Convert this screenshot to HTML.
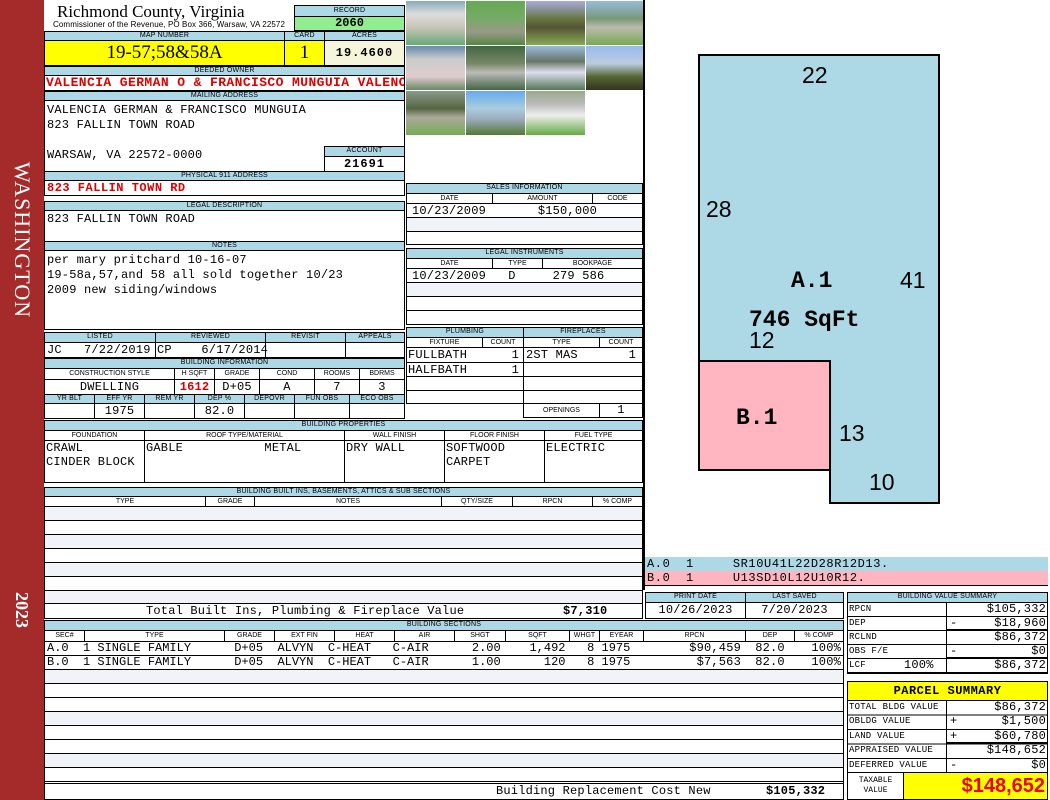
<!DOCTYPE html>
<html><head><meta charset="utf-8"><style>
*{margin:0;padding:0}
body{width:1050px;height:800px;position:relative;background:#fff;overflow:hidden;font-family:"Liberation Mono",monospace;font-size:12px;color:#000}
div{position:absolute;box-sizing:border-box}
.b{border:1px solid #000}
.h{background:#add8e6;border:1px solid #000;font:7px/8px "Liberation Sans",sans-serif;text-align:center;text-transform:uppercase;letter-spacing:.2px}
.c{border:1px solid #000;font:7px/9px "Liberation Sans",sans-serif;text-align:center}
.t{white-space:nowrap;line-height:14px;letter-spacing:.2px}
.r{text-align:right}
.ce{text-align:center}
.lb{background:#f0f4f8}
</style></head><body>
<!-- sidebar -->
<div style="left:0;top:0;width:44px;height:800px;background:#a52a2a"></div>
<div style="left:22px;top:240px;width:0;height:0"><div style="left:-100px;top:-13px;width:200px;height:26px;transform:rotate(90deg);color:#fff;font:22px/26px 'Liberation Serif',serif;text-align:center;letter-spacing:1px">WASHINGTON</div></div>
<div style="left:22px;top:610px;width:0;height:0"><div style="left:-40px;top:-12px;width:80px;height:24px;transform:rotate(90deg);color:#fff;font:bold 18px/24px 'Liberation Serif',serif;text-align:center">2023</div></div>

<!-- title -->
<div style="left:57px;top:2px;font:17px/20px 'Liberation Serif',serif;white-space:nowrap">Richmond County, Virginia</div>
<div style="left:53px;top:20px;font:8px/9px 'Liberation Sans',sans-serif;white-space:nowrap;letter-spacing:.1px">Commissioner of the Revenue, PO Box 366, Warsaw, VA 22572</div>
<div class="h" style="left:294px;top:5px;width:111px;height:12px;line-height:10px">Record</div>
<div class="b" style="left:294px;top:16px;width:111px;height:15px;background:#90ee90;font:bold 12px/13px 'Liberation Mono';text-align:center">2060</div>
<div class="h" style="left:44px;top:31px;width:241px;height:10px">Map Number</div>
<div class="h" style="left:284px;top:31px;width:41px;height:10px">Card</div>
<div class="h" style="left:324px;top:31px;width:81px;height:10px">Acres</div>
<div class="b" style="left:44px;top:40px;width:241px;height:26px;background:#ffff00;font:19px/24px 'Liberation Serif',serif;text-align:center">19-57;58&amp;58A</div>
<div class="b" style="left:284px;top:40px;width:41px;height:26px;background:#ffff00;font:19px/24px 'Liberation Serif',serif;text-align:center">1</div>
<div class="b" style="left:324px;top:40px;width:81px;height:26px;background:#f5f5dc;font:bold 12px/24px 'Liberation Mono';text-align:center;letter-spacing:1px">19.4600</div>
<div class="h" style="left:44px;top:66px;width:361px;height:10px">Deeded Owner</div>
<div class="b t" style="left:44px;top:75px;width:361px;height:16px;color:#d00;font-weight:bold;font-size:13px;overflow:hidden;padding-left:1px;letter-spacing:.4px">VALENCIA GERMAN O &amp; FRANCISCO MUNGUIA VALENC</div>
<div class="h" style="left:44px;top:91px;width:361px;height:10px">Mailing Address</div>
<div class="b t" style="left:44px;top:100px;width:361px;height:72px;padding:2px 2px;line-height:15px">VALENCIA GERMAN &amp; FRANCISCO MUNGUIA<br>823 FALLIN TOWN ROAD<br><br>WARSAW, VA 22572-0000</div>
<div class="h" style="left:324px;top:146px;width:81px;height:11px">Account</div>
<div class="b" style="left:324px;top:156px;width:81px;height:16px;font:bold 12px/14px 'Liberation Mono';text-align:center;letter-spacing:1px">21691</div>
<div class="h" style="left:44px;top:171px;width:361px;height:10px">Physical 911 Address</div>
<div class="b t" style="left:44px;top:180px;width:361px;height:16px;color:#d00;font-weight:bold;padding-left:2px;letter-spacing:.5px">823 FALLIN TOWN RD</div>
<div class="h" style="left:44px;top:201px;width:361px;height:10px">Legal Description</div>
<div class="b t" style="left:44px;top:210px;width:361px;height:32px;padding:1px 2px">823 FALLIN TOWN ROAD</div>
<div class="h" style="left:44px;top:241px;width:361px;height:10px">Notes</div>
<div class="b t" style="left:44px;top:250px;width:361px;height:80px;padding:2px 2px;line-height:15px">per mary pritchard 10-16-07<br>19-58a,57,and 58 all sold together 10/23<br>2009 new siding/windows</div>

<!-- listed -->
<div class="h" style="left:44px;top:332px;width:112px;height:11px">Listed</div>
<div class="h" style="left:155px;top:332px;width:111px;height:11px">Reviewed</div>
<div class="h" style="left:265px;top:332px;width:81px;height:11px">Revisit</div>
<div class="h" style="left:345px;top:332px;width:60px;height:11px">Appeals</div>
<div class="b t" style="left:44px;top:342px;width:112px;height:16px;padding-left:2px">JC&nbsp;&nbsp;&nbsp;7/22/2019</div>
<div class="b t" style="left:155px;top:342px;width:111px;height:16px;padding-left:1px">CP&nbsp;&nbsp;&nbsp;&nbsp;6/17/2014</div>
<div class="b" style="left:265px;top:342px;width:81px;height:16px"></div>
<div class="b" style="left:345px;top:342px;width:60px;height:16px"></div>

<!-- building info -->
<div class="h" style="left:44px;top:358px;width:361px;height:11px">Building Information</div>
<div class="c" style="left:44px;top:368px;width:131px;height:12px">CONSTRUCTION STYLE</div>
<div class="c" style="left:174px;top:368px;width:41px;height:12px">H SQFT</div>
<div class="c" style="left:214px;top:368px;width:46px;height:12px">GRADE</div>
<div class="c" style="left:259px;top:368px;width:56px;height:12px">COND</div>
<div class="c" style="left:314px;top:368px;width:46px;height:12px">ROOMS</div>
<div class="c" style="left:359px;top:368px;width:46px;height:12px">BDRMS</div>
<div class="b t ce" style="left:44px;top:379px;width:131px;height:16px">DWELLING</div>
<div class="b t ce" style="left:174px;top:379px;width:41px;height:16px;color:#d00;font-weight:bold">1612</div>
<div class="b t ce" style="left:214px;top:379px;width:46px;height:16px">D+05</div>
<div class="b t ce" style="left:259px;top:379px;width:56px;height:16px">A</div>
<div class="b t ce" style="left:314px;top:379px;width:46px;height:16px">7</div>
<div class="b t ce" style="left:359px;top:379px;width:46px;height:16px">3</div>
<div class="h" style="left:44px;top:394px;width:51px;height:10px">YR BLT</div>
<div class="h" style="left:94px;top:394px;width:51px;height:10px">EFF YR</div>
<div class="h" style="left:144px;top:394px;width:51px;height:10px">REM YR</div>
<div class="h" style="left:194px;top:394px;width:51px;height:10px">DEP %</div>
<div class="h" style="left:244px;top:394px;width:51px;height:10px">DEPOVR</div>
<div class="h" style="left:294px;top:394px;width:56px;height:10px">FUN OBS</div>
<div class="h" style="left:349px;top:394px;width:56px;height:10px">ECO OBS</div>
<div class="b" style="left:44px;top:403px;width:51px;height:16px"></div>
<div class="b t ce" style="left:94px;top:403px;width:51px;height:16px">1975</div>
<div class="b" style="left:144px;top:403px;width:51px;height:16px"></div>
<div class="b t ce" style="left:194px;top:403px;width:51px;height:16px">82.0</div>
<div class="b" style="left:244px;top:403px;width:51px;height:16px"></div>
<div class="b" style="left:294px;top:403px;width:56px;height:16px"></div>
<div class="b" style="left:349px;top:403px;width:56px;height:16px"></div>

<!-- photos -->
<div style="left:406px;top:1px;width:59px;height:44px;background:linear-gradient(#8ab 0,#ddd 30%,#c9c4b8 60%,#6a7 100%)"></div>
<div style="left:466px;top:1px;width:59px;height:44px;background:linear-gradient(#6a5 0,#7a6 40%,#998 70%,#584 100%)"></div>
<div style="left:526px;top:1px;width:59px;height:44px;background:linear-gradient(#aad 0,#674 40%,#553 60%,#8a5 100%)"></div>
<div style="left:586px;top:1px;width:57px;height:44px;background:linear-gradient(#9bd 0,#797 40%,#bba 60%,#7a5 100%)"></div>
<div style="left:406px;top:46px;width:59px;height:44px;background:linear-gradient(#68a 0,#ccc 30%,#dcc 70%,#686 100%)"></div>
<div style="left:466px;top:46px;width:59px;height:44px;background:linear-gradient(#464 0,#786 40%,#bbb 60%,#464 100%)"></div>
<div style="left:526px;top:46px;width:59px;height:44px;background:linear-gradient(#9bd 0,#676 35%,#dde 60%,#575 100%)"></div>
<div style="left:586px;top:46px;width:57px;height:44px;background:linear-gradient(#9be 0,#bcd 40%,#563 70%,#332 100%)"></div>
<div style="left:406px;top:91px;width:59px;height:44px;background:linear-gradient(#898 0,#564 40%,#aa9 60%,#7a5 100%)"></div>
<div style="left:466px;top:91px;width:59px;height:44px;background:linear-gradient(#6ae 0,#acd 40%,#9ab 65%,#573 100%)"></div>
<div style="left:526px;top:91px;width:59px;height:44px;background:linear-gradient(#9a8 0,#bbb 30%,#eee 55%,#6a4 100%)"></div>
<div style="left:643px;top:0;width:2px;height:590px;background:#000"></div>

<!-- sales -->
<div class="h" style="left:406px;top:183px;width:237px;height:11px">Sales Information</div>
<div class="c" style="left:406px;top:193px;width:87px;height:11px">DATE</div>
<div class="c" style="left:492px;top:193px;width:101px;height:11px">AMOUNT</div>
<div class="c" style="left:592px;top:193px;width:51px;height:11px">CODE</div>
<div class="b t" style="left:406px;top:203px;width:237px;height:15px;padding-left:5px">10/23/2009&nbsp;&nbsp;&nbsp;&nbsp;&nbsp;&nbsp;&nbsp;$150,000</div>
<div class="b lb" style="left:406px;top:217px;width:237px;height:15px"></div>
<div class="b" style="left:406px;top:231px;width:237px;height:14px"></div>
<div class="h" style="left:406px;top:248px;width:237px;height:11px">Legal Instruments</div>
<div class="c" style="left:406px;top:258px;width:87px;height:11px">DATE</div>
<div class="c" style="left:492px;top:258px;width:51px;height:11px">TYPE</div>
<div class="c" style="left:542px;top:258px;width:101px;height:11px">BOOKPAGE</div>
<div class="b t" style="left:406px;top:268px;width:237px;height:15px;padding-left:5px">10/23/2009&nbsp;&nbsp;&nbsp;D&nbsp;&nbsp;&nbsp;&nbsp;&nbsp;279 586</div>
<div class="b lb" style="left:406px;top:282px;width:237px;height:15px"></div>
<div class="b" style="left:406px;top:296px;width:237px;height:15px"></div>
<div class="b" style="left:406px;top:310px;width:237px;height:15px"></div>

<!-- plumbing -->
<div class="h" style="left:406px;top:327px;width:118px;height:11px">Plumbing</div>
<div class="h" style="left:523px;top:327px;width:120px;height:11px">Fireplaces</div>
<div class="c" style="left:406px;top:337px;width:77px;height:11px">FIXTURE</div>
<div class="c" style="left:482px;top:337px;width:42px;height:11px">COUNT</div>
<div class="c" style="left:523px;top:337px;width:77px;height:11px">TYPE</div>
<div class="c" style="left:599px;top:337px;width:44px;height:11px">COUNT</div>
<div class="b t" style="left:406px;top:347px;width:118px;height:16px;padding:0 4px 0 1px">FULLBATH<span style="float:right">1</span></div>
<div class="b t" style="left:406px;top:362px;width:118px;height:15px;padding:0 4px 0 1px">HALFBATH<span style="float:right">1</span></div>
<div class="b" style="left:406px;top:376px;width:118px;height:15px"></div>
<div class="b" style="left:406px;top:390px;width:118px;height:14px"></div>
<div class="b t" style="left:523px;top:347px;width:120px;height:16px;padding:0 6px 0 2px">2ST MAS<span style="float:right">1</span></div>
<div class="b" style="left:523px;top:362px;width:120px;height:15px"></div>
<div class="b" style="left:523px;top:376px;width:120px;height:15px"></div>
<div class="b" style="left:523px;top:390px;width:120px;height:14px"></div>
<div class="c" style="left:523px;top:403px;width:77px;height:15px;line-height:13px">OPENINGS</div>
<div class="b t ce" style="left:599px;top:403px;width:44px;height:15px;line-height:13px">1</div>

<!-- building properties -->
<div class="h" style="left:44px;top:420px;width:599px;height:11px">Building Properties</div>
<div class="c" style="left:44px;top:430px;width:101px;height:11px">FOUNDATION</div>
<div class="c" style="left:144px;top:430px;width:201px;height:11px">ROOF TYPE/MATERIAL</div>
<div class="c" style="left:344px;top:430px;width:101px;height:11px">WALL FINISH</div>
<div class="c" style="left:444px;top:430px;width:101px;height:11px">FLOOR FINISH</div>
<div class="c" style="left:544px;top:430px;width:99px;height:11px">FUEL TYPE</div>
<div class="b t" style="left:44px;top:440px;width:101px;height:43px;padding-left:1px">CRAWL<br>CINDER BLOCK</div>
<div class="b t" style="left:144px;top:440px;width:201px;height:43px;padding-left:1px">GABLE&nbsp;&nbsp;&nbsp;&nbsp;&nbsp;&nbsp;&nbsp;&nbsp;&nbsp;&nbsp;&nbsp;METAL</div>
<div class="b t" style="left:344px;top:440px;width:101px;height:43px;padding-left:1px">DRY WALL</div>
<div class="b t" style="left:444px;top:440px;width:101px;height:43px;padding-left:1px">SOFTWOOD<br>CARPET</div>
<div class="b t" style="left:544px;top:440px;width:99px;height:43px;padding-left:1px">ELECTRIC</div>

<!-- built ins -->
<div class="h" style="left:44px;top:487px;width:599px;height:10px">Building Built Ins, Basements, Attics &amp; Sub Sections</div>
<div class="c" style="left:44px;top:496px;width:162px;height:11px">TYPE</div>
<div class="c" style="left:205px;top:496px;width:50px;height:11px">GRADE</div>
<div class="c" style="left:254px;top:496px;width:188px;height:11px">NOTES</div>
<div class="c" style="left:441px;top:496px;width:72px;height:11px">QTY/SIZE</div>
<div class="c" style="left:512px;top:496px;width:81px;height:11px">RPCN</div>
<div class="c" style="left:592px;top:496px;width:51px;height:11px">% COMP</div>
<div class="b" style="left:44px;top:506px;width:599px;height:98px;background:repeating-linear-gradient(#f0f4f8 0,#f0f4f8 13px,#000 13px,#000 14px,#fff 14px,#fff 27px,#000 27px,#000 28px)"></div>
<div class="b t" style="left:44px;top:603px;width:599px;height:16px;font-size:12px;line-height:15px"><span style="position:absolute;left:101px">Total Built Ins, Plumbing &amp; Fireplace Value</span><span style="position:absolute;left:518px;font-weight:bold">$7,310</span></div>

<!-- building sections -->
<div class="h" style="left:44px;top:620px;width:800px;height:11px">Building Sections</div>
<div class="c" style="left:44px;top:630px;width:41px;height:12px">SEC#</div>
<div class="c" style="left:84px;top:630px;width:141px;height:12px">TYPE</div>
<div class="c" style="left:224px;top:630px;width:51px;height:12px">GRADE</div>
<div class="c" style="left:274px;top:630px;width:61px;height:12px">EXT FIN</div>
<div class="c" style="left:334px;top:630px;width:61px;height:12px">HEAT</div>
<div class="c" style="left:394px;top:630px;width:61px;height:12px">AIR</div>
<div class="c" style="left:454px;top:630px;width:52px;height:12px">SHGT</div>
<div class="c" style="left:505px;top:630px;width:65px;height:12px">SQFT</div>
<div class="c" style="left:569px;top:630px;width:31px;height:12px">WHGT</div>
<div class="c" style="left:599px;top:630px;width:45px;height:12px">EYEAR</div>
<div class="c" style="left:643px;top:630px;width:103px;height:12px">RPCN</div>
<div class="c" style="left:745px;top:630px;width:50px;height:12px">DEP</div>
<div class="c" style="left:794px;top:630px;width:50px;height:12px">% COMP</div>
<div class="b" style="left:44px;top:641px;width:800px;height:143px;background:repeating-linear-gradient(#fff 0,#fff 13px,#000 13px,#000 14px,#fff 14px,#fff 27px,#000 27px,#000 28px,#f0f4f8 28px,#f0f4f8 41px,#000 41px,#000 42px)"></div>
<div class="t" style="left:47px;top:641px;width:800px;letter-spacing:0">A.0&nbsp;&nbsp;1 SINGLE FAMILY&nbsp;&nbsp;&nbsp;&nbsp;&nbsp;&nbsp;D+05&nbsp;&nbsp;ALVYN&nbsp;&nbsp;C-HEAT&nbsp;&nbsp;&nbsp;C-AIR&nbsp;&nbsp;&nbsp;&nbsp;&nbsp;&nbsp;2.00&nbsp;&nbsp;&nbsp;&nbsp;1,492&nbsp;&nbsp;&nbsp;8 1975</div>
<div class="t" style="left:47px;top:655px;width:800px;letter-spacing:0">B.0&nbsp;&nbsp;1 SINGLE FAMILY&nbsp;&nbsp;&nbsp;&nbsp;&nbsp;&nbsp;D+05&nbsp;&nbsp;ALVYN&nbsp;&nbsp;C-HEAT&nbsp;&nbsp;&nbsp;C-AIR&nbsp;&nbsp;&nbsp;&nbsp;&nbsp;&nbsp;1.00&nbsp;&nbsp;&nbsp;&nbsp;&nbsp;&nbsp;120&nbsp;&nbsp;&nbsp;8 1975</div>
<div class="t r" style="left:643px;top:641px;width:98px">$90,459</div>
<div class="t r" style="left:643px;top:655px;width:98px">$7,563</div>
<div class="t ce" style="left:745px;top:641px;width:50px">82.0</div>
<div class="t ce" style="left:745px;top:655px;width:50px">82.0</div>
<div class="t r" style="left:794px;top:641px;width:47px">100%</div>
<div class="t r" style="left:794px;top:655px;width:47px">100%</div>
<div class="b t" style="left:44px;top:783px;width:800px;height:17px;line-height:15px"><span style="position:absolute;left:451px">Building Replacement Cost New</span><span style="position:absolute;left:721px;font-weight:bold">$105,332</span></div>

<!-- sketch -->
<svg style="position:absolute;left:0;top:0" width="1050" height="600">
<polygon points="699,55 939,55 939,503 830,503 830,470 699,470" fill="#add8e6" stroke="#000" stroke-width="2"/>
<rect x="699" y="361" width="131" height="109" fill="#ffb6c1" stroke="#000" stroke-width="2"/>
<g font-family="Liberation Sans,sans-serif" font-size="23">
<text x="802" y="83">22</text><text x="706" y="217">28</text><text x="900" y="288">41</text>
<text x="749" y="348">12</text><text x="839" y="441">13</text><text x="869" y="490">10</text></g>
<g font-family="Liberation Mono,monospace" font-weight="bold" font-size="23">
<text x="791" y="287">A.1</text><text x="749" y="326">746 SqFt</text><text x="736" y="424">B.1</text></g>
</svg>
<div class="t" style="left:645px;top:557px;width:403px;height:15px;background:#add8e6;font-size:12px;padding-left:2px;letter-spacing:.6px">A.0&nbsp;&nbsp;1&nbsp;&nbsp;&nbsp;&nbsp;&nbsp;SR10U41L22D28R12D13.</div>
<div class="t" style="left:645px;top:571px;width:403px;height:15px;background:#ffb6c1;font-size:12px;padding-left:2px;letter-spacing:.6px">B.0&nbsp;&nbsp;1&nbsp;&nbsp;&nbsp;&nbsp;&nbsp;U13SD10L12U10R12.</div>
<div style="left:645px;top:585px;width:403px;height:1px;background:#000"></div>

<!-- print date -->
<div class="h" style="left:645px;top:592px;width:101px;height:11px">Print Date</div>
<div class="h" style="left:745px;top:592px;width:99px;height:11px">Last Saved</div>
<div class="b t ce" style="left:645px;top:602px;width:101px;height:17px;line-height:15px">10/26/2023</div>
<div class="b t ce" style="left:745px;top:602px;width:99px;height:17px;line-height:15px">7/20/2023</div>

<!-- value summary -->
<div class="h" style="left:847px;top:592px;width:201px;height:11px">Building Value Summary</div>
<div class="b" style="left:847px;top:602px;width:201px;height:72px;background:repeating-linear-gradient(#fff 0,#fff 13px,#000 13px,#000 14px)"></div>
<div style="left:946px;top:602px;width:1px;height:72px;background:#000"></div>
<div style="left:947px;top:629px;width:101px;height:2px;background:#000"></div>
<div style="left:947px;top:657px;width:101px;height:2px;background:#000"></div>
<div class="t" style="left:849px;top:602px;font-size:9px">RPCN</div>
<div class="t" style="left:849px;top:616px;font-size:9px">DEP</div>
<div class="t" style="left:849px;top:630px;font-size:9px">RCLND</div>
<div class="t" style="left:849px;top:644px;font-size:9px">OBS F/E</div>
<div class="t" style="left:849px;top:658px;font-size:9px">LCF</div>
<div class="t" style="left:904px;top:658px;font-size:12px">100%</div>
<div class="t r" style="left:947px;top:602px;width:99px">$105,332</div>
<div class="t r" style="left:947px;top:616px;width:99px"><span style="float:left;padding-left:3px">-</span>$18,960</div>
<div class="t r" style="left:947px;top:630px;width:99px">$86,372</div>
<div class="t r" style="left:947px;top:644px;width:99px"><span style="float:left;padding-left:3px">-</span>$0</div>
<div class="t r" style="left:947px;top:658px;width:99px">$86,372</div>

<!-- parcel summary -->
<div class="b" style="left:847px;top:681px;width:201px;height:20px;background:#ffff00;font:bold 12px/18px 'Liberation Mono';text-align:center;letter-spacing:.5px">PARCEL SUMMARY</div>
<div class="b" style="left:847px;top:700px;width:201px;height:73px;background:repeating-linear-gradient(#fff 0,#fff 13.5px,#000 13.5px,#000 14.5px)"></div>
<div style="left:946px;top:700px;width:1px;height:72px;background:#000"></div>
<div style="left:947px;top:742px;width:101px;height:2px;background:#000"></div>
<div class="t" style="left:849px;top:700px;font-size:9px">TOTAL BLDG VALUE</div>
<div class="t" style="left:849px;top:714px;font-size:9px">OBLDG VALUE</div>
<div class="t" style="left:849px;top:729px;font-size:9px">LAND VALUE</div>
<div class="t" style="left:849px;top:743px;font-size:9px">APPRAISED VALUE</div>
<div class="t" style="left:849px;top:758px;font-size:9px">DEFERRED VALUE</div>
<div class="t r" style="left:947px;top:700px;width:99px">$86,372</div>
<div class="t r" style="left:947px;top:714px;width:99px"><span style="float:left;padding-left:3px">+</span>$1,500</div>
<div class="t r" style="left:947px;top:729px;width:99px"><span style="float:left;padding-left:3px">+</span>$60,780</div>
<div class="t r" style="left:947px;top:743px;width:99px">$148,652</div>
<div class="t r" style="left:947px;top:758px;width:99px"><span style="float:left;padding-left:3px">-</span>$0</div>
<div class="b" style="left:847px;top:772px;width:57px;height:28px;font:8px/10px 'Liberation Mono';text-align:center;padding-top:3px">TAXABLE<br>VALUE</div>
<div class="b" style="left:903px;top:772px;width:145px;height:28px;background:#ffff00;color:#e00;font:bold 20px/26px 'Liberation Sans',sans-serif;text-align:right;padding-right:2px">$148,652</div>
</body></html>
